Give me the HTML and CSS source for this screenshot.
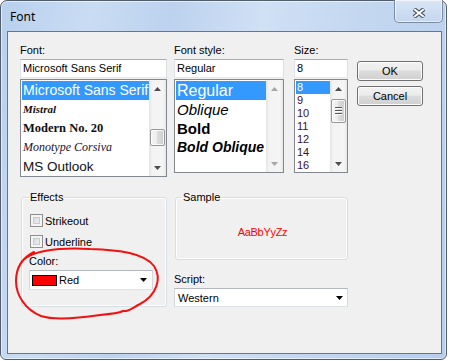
FILE: index.html
```html
<!DOCTYPE html>
<html>
<head>
<meta charset="utf-8">
<title>Font</title>
<link rel="stylesheet" href="styles.css">
</head>
<body>
<div class="window">
  <div class="titlebar">
    <span class="title">Font</span>
    <div class="close">
      <svg width="14" height="10" viewBox="0 0 14 10">
        <path d="M2 1 L12 9 M12 1 L2 9" stroke="#4a5566" stroke-width="4.2" fill="none"/>
        <path d="M2.3 1.3 L11.7 8.7 M11.7 1.3 L2.3 8.7" stroke="#ffffff" stroke-width="2" fill="none"/>
      </svg>
    </div>
  </div>
  <div class="client">
    <div class="top">
      <div class="col col-font">
        <div class="label">Font:</div>
        <div class="input">Microsoft Sans Serif</div>
        <div class="list list-font">
          <div class="items">
            <div class="item sel f-mss">Microsoft Sans Serif</div>
            <div class="item f-mistral">Mistral</div>
            <div class="item f-modern">Modern No. 20</div>
            <div class="item f-corsiva">Monotype Corsiva</div>
            <div class="item f-outlook">MS Outlook</div>
          </div>
          <div class="sb">
            <div class="sb-btn"><svg width="7" height="4" viewBox="0 0 7 4"><path d="M3.5 0 L7 4 L0 4Z" class="arr"/></svg></div>
            <div class="sb-track"><div class="thumb thumb-font"></div></div>
            <div class="sb-btn"><svg width="7" height="4" viewBox="0 0 7 4"><path d="M0 0 L7 0 L3.5 4Z" class="arr"/></svg></div>
          </div>
        </div>
      </div>
      <div class="col col-style">
        <div class="label">Font style:</div>
        <div class="input">Regular</div>
        <div class="list list-style">
          <div class="items">
            <div class="item sel s-reg">Regular</div>
            <div class="item s-obl">Oblique</div>
            <div class="item s-bold">Bold</div>
            <div class="item s-bobl">Bold Oblique</div>
          </div>
          <div class="sb">
            <div class="sb-btn"><svg width="7" height="4" viewBox="0 0 7 4"><path d="M3.5 0 L7 4 L0 4Z" class="arr dis"/></svg></div>
            <div class="sb-track"></div>
            <div class="sb-btn"><svg width="7" height="4" viewBox="0 0 7 4"><path d="M0 0 L7 0 L3.5 4Z" class="arr dis"/></svg></div>
          </div>
        </div>
      </div>
      <div class="col col-size">
        <div class="label">Size:</div>
        <div class="input">8</div>
        <div class="list list-size">
          <div class="items">
            <div class="item sel">8</div>
            <div class="item">9</div>
            <div class="item">10</div>
            <div class="item">11</div>
            <div class="item">12</div>
            <div class="item">14</div>
            <div class="item">16</div>
          </div>
          <div class="sb">
            <div class="sb-btn"><svg width="7" height="4" viewBox="0 0 7 4"><path d="M3.5 0 L7 4 L0 4Z" class="arr"/></svg></div>
            <div class="sb-track"><div class="thumb thumb-size"><div class="grip"></div></div></div>
            <div class="sb-btn"><svg width="7" height="4" viewBox="0 0 7 4"><path d="M0 0 L7 0 L3.5 4Z" class="arr"/></svg></div>
          </div>
        </div>
      </div>
      <div class="col col-btns">
        <div class="btn">OK</div>
        <div class="btn">Cancel</div>
      </div>
    </div>
    <div class="bottom">
      <fieldset class="group effects">
        <legend>Effects</legend>
        <div class="check-row"><span class="checkbox"></span><span class="check-label">Strikeout</span></div>
        <div class="check-row"><span class="checkbox"></span><span class="check-label">Underline</span></div>
        <div class="label color-label">Color:</div>
        <div class="combo color-combo">
          <span class="swatch"></span>
          <span class="combo-text">Red</span>
          <svg class="drop" width="7" height="4" viewBox="0 0 7 4"><path d="M0 0 L7 0 L3.5 4Z" fill="#000"/></svg>
        </div>
      </fieldset>
      <div class="right-col">
        <fieldset class="group sample">
          <legend>Sample</legend>
          <div class="sample-box"><span class="sample-text">AaBbYyZz</span></div>
        </fieldset>
        <div class="label script-label">Script:</div>
        <div class="combo script-combo">
          <span class="combo-text">Western</span>
          <svg class="drop" width="7" height="4" viewBox="0 0 7 4"><path d="M0 0 L7 0 L3.5 4Z" fill="#000"/></svg>
        </div>
      </div>
    </div>
  </div>
  <svg class="annot" width="447" height="361" viewBox="0 0 447 361">
    <path d="M21 263 C28 251 58 247 90 249 C120 250 144 253 154 266 C162 278 157 295 140 304 C132 308 129 312 123 311 C119 313 112 314 100 315 C80 318 56 321 41 316 C26 310 16 296 16 281 C16 269 20 259 34 252" fill="none" stroke="#f21010" stroke-width="2" stroke-linecap="round"/>
  </svg>
</div>
</body>
</html>
```

FILE: styles.css
```css
body {
  margin: 0;
  background: #ffffff;
  font-family: "Liberation Sans", Arial, sans-serif;
  font-size: 11px;
  color: #000;
}

.window {
  position: relative;
  box-sizing: border-box;
  width: 447px;
  height: 360px;
  border: 1px solid #535e6c;
  border-radius: 7px 7px 6px 6px;
  background: linear-gradient(100deg, #b8d0ee 0%, #c9dcf3 18%, #bcd2ee 34%, #d0e0f5 52%, #c3d7f0 72%, #b6ceec 100%);
  box-shadow: inset 0 0 0 1px rgba(255, 255, 255, 0.55);
  padding: 0 4px 5px 6px;
  display: flex;
  flex-direction: column;
}

.titlebar {
  height: 30px;
  display: flex;
  justify-content: space-between;
  align-items: flex-start;
}

.title {
  font-family: "Noto Sans", "Liberation Sans", sans-serif;
  font-size: 12px;
  line-height: 16px;
  margin: 8px 0 0 3px;
  color: #000;
}

.close {
  box-sizing: border-box;
  width: 49px;
  height: 23px;
  margin: -1px -1px 0 0;
  border: 1px solid #7a8aa2;
  border-top: none;
  border-radius: 0 0 5px 5px;
  background: linear-gradient(#d9e6f6, #c4d6ee);
  box-shadow: inset 0 0 0 1px rgba(255, 255, 255, 0.6);
  display: flex;
  align-items: center;
  justify-content: center;
  padding-top: 3px;
}

.client {
  flex: 1;
  border: 1px solid #66768c;
  background: #f0f0f0;
  padding: 11px 0 0 12px;
}

.top {
  display: flex;
  align-items: flex-start;
}

.col {
  display: flex;
  flex-direction: column;
}

.col-font { width: 147px; }
.col-style { width: 110px; margin-left: 7px; }
.col-size { width: 54px; margin-left: 10px; }
.col-btns { width: 66px; margin-left: 9px; padding-top: 18px; gap: 5px; }

.label {
  height: 14px;
  line-height: 14px;
  margin-bottom: 2px;
  white-space: nowrap;
}

.input {
  box-sizing: border-box;
  height: 19px;
  border: 1px solid;
  border-color: #abadb3 #dbdfe6 #e3e9ef #e2e3ea;
  background: #fff;
  padding: 0 2px;
  line-height: 17px;
  white-space: nowrap;
  overflow: hidden;
}

.list {
  box-sizing: border-box;
  margin-top: 1px;
  border: 1px solid #828790;
  background: #fff;
  display: flex;
}

.list-font { height: 98px; }
.list-style { height: 94px; }
.list-size { height: 94px; }

.items {
  flex: 1;
  min-width: 0;
  overflow: hidden;
  padding: 1px 0 0 1px;
}

.item {
  white-space: nowrap;
  overflow: hidden;
  padding-left: 1px;
}

.sel {
  background: #3399ff;
  color: #fff;
}

.list-font .item { height: 19px; line-height: 19px; color: #111; }
.list-font .sel { color: #fff; }
.f-mss { font-size: 14px; }
.f-mistral { font-family: "Liberation Serif", serif; font-style: italic; font-weight: bold; font-size: 11px; }
.f-modern { font-family: "Liberation Serif", serif; font-weight: bold; font-size: 12.5px; }
.f-corsiva { font-family: "Liberation Serif", serif; font-style: italic; font-size: 12px; color: #1c1034 !important; }
.f-outlook { font-size: 13.5px; }

.list-style .item { height: 19px; line-height: 19px; }
.s-reg { font-size: 16px; }
.s-obl { font-size: 15px; font-style: italic; }
.s-bold { font-size: 15px; font-weight: bold; }
.s-bobl { font-size: 14px; font-weight: bold; font-style: italic; }

.list-size .item {
  height: 13px;
  line-height: 13px;
  font-size: 11px;
  color: #3a1036;
}
.list-size .sel { color: #fff; }

.sb {
  width: 17px;
  flex: none;
  display: flex;
  flex-direction: column;
  background: linear-gradient(to right, #e4e4e4, #f3f3f3 18%, #f5f5f5 82%, #e6e6e6);
}

.sb-btn {
  height: 17px;
  flex: none;
  display: flex;
  align-items: center;
  justify-content: center;
}

.sb-track { flex: 1; }

.arr { fill: #4d4d4d; }
.arr.dis { fill: #a6a6a6; }

.thumb {
  box-sizing: border-box;
  margin: 0 1px;
  border: 1px solid #979797;
  border-radius: 2px;
  background: linear-gradient(to right, #f5f5f5, #ececec 50%, #dcdcdc 50%, #cdcdcd);
  box-shadow: inset 0 0 0 1px rgba(255, 255, 255, 0.8);
  display: flex;
  align-items: center;
  justify-content: center;
}

.thumb-font { margin-top: 32px; height: 17px; }
.thumb-size { margin-top: 2px; height: 24px; }

.grip {
  width: 7px;
  height: 8px;
  background: repeating-linear-gradient(to bottom, #555 0 1px, #ffffff 1px 2px, transparent 2px 3px);
}

.btn {
  box-sizing: border-box;
  height: 20px;
  border: 1px solid #707070;
  border-radius: 3px;
  background: linear-gradient(#f2f2f2 0%, #ebebeb 45%, #dddddd 50%, #cfcfcf 100%);
  box-shadow: inset 0 0 0 1px #fcfcfc;
  display: flex;
  align-items: center;
  justify-content: center;
}

.bottom {
  display: flex;
  align-items: flex-start;
  margin-top: 13px;
}

.group {
  box-sizing: border-box;
  min-width: 0;
  margin: 0;
  border: 1px solid #d5dfe5;
  border-radius: 3px;
  box-shadow: inset 0 0 0 1px #ffffff;
}

.group legend {
  font-size: 11px;
  line-height: 14px;
  padding: 0 1px;
  margin-left: -1px;
}

.effects {
  width: 146px;
  margin-left: 1px;
  padding: 6px 8px 16px 8px;
}

.check-row {
  height: 21px;
  display: flex;
  align-items: center;
}

.checkbox {
  box-sizing: border-box;
  width: 13px;
  height: 13px;
  border: 1px solid #8e8f8f;
  background: #f4f4f4;
  box-shadow: inset 0 0 0 2px #f4f4f4, inset 0 0 0 3px #c6cbd2;
  background-image: linear-gradient(135deg, #cdd1d6, #f7f7f7);
}

.check-label { margin-left: 2px; }

.color-label {
  margin: 2px 0 2px -1px;
}

.combo {
  box-sizing: border-box;
  border: 1px solid;
  border-color: #b4b8bf #d3d8de #dde2e8 #d3d8de;
  background: #fff;
  display: flex;
  align-items: center;
}

.color-combo {
  width: 124px;
  height: 20px;
  margin-left: -1px;
  padding-left: 2px;
}

.swatch {
  box-sizing: border-box;
  width: 25px;
  height: 11px;
  border: 1px solid #000;
  background: #ff0000;
}

.color-combo .combo-text { margin-left: 2px; flex: 1; }

.drop { flex: none; margin-right: 5px; }

.right-col {
  width: 174px;
  margin-left: 7px;
  display: flex;
  flex-direction: column;
}

.sample {
  width: 173px;
  margin-left: 1px;
  padding: 0 7px;
}

.sample-box {
  height: 55px;
  display: flex;
  align-items: center;
  justify-content: center;
}

.sample-text {
  color: #ff0000;
  font-size: 11px;
  letter-spacing: -0.3px;
  margin-left: 2px;
}

.script-label { margin-top: 12px; }

.script-combo {
  width: 174px;
  height: 19px;
  padding-left: 3px;
}

.script-combo .combo-text { flex: 1; }
.script-combo .drop { margin-right: 4px; }

.annot {
  position: absolute;
  left: -1px;
  top: -1px;
  pointer-events: none;
}
```
